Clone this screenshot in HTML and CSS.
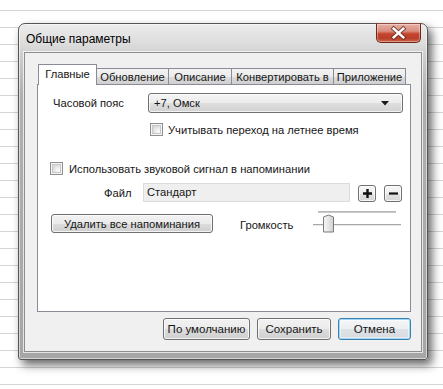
FILE: index.html
```html
<!DOCTYPE html>
<html lang="ru">
<head>
<meta charset="utf-8">
<title>Общие параметры</title>
<link rel="stylesheet" href="styles.css">
</head>
<body>
<div class="dialog">
  <div class="titlebar">
    <span class="title">Общие параметры</span>
    <div class="close">
      <svg width="45" height="20" viewBox="0 0 45 20">
        <path d="M17.5 5.5 L27.5 14.5 M27.5 5.5 L17.5 14.5" stroke="#6a2a20" stroke-width="4.6" stroke-linecap="square" fill="none" opacity="0.75"/>
        <path d="M17.5 5.5 L27.5 14.5 M27.5 5.5 L17.5 14.5" stroke="#ffffff" stroke-width="2.6" stroke-linecap="square" fill="none"/>
      </svg>
    </div>
  </div>
  <div class="client">
    <div class="tabs">
      <div class="tab tab-main active">Главные</div>
      <div class="tab tab-update">Обновление</div>
      <div class="tab tab-desc">Описание</div>
      <div class="tab tab-conv">Конвертировать в</div>
      <div class="tab tab-app">Приложение</div>
    </div>
    <div class="panel">
      <div class="row row-tz">
        <span class="label-tz">Часовой пояс</span>
        <div class="combo">
          <span>+7, Омск</span>
          <svg width="8" height="5" viewBox="0 0 8 5"><path d="M0 0 H8 L4 4.5 Z" fill="#1a1a1a"/></svg>
        </div>
      </div>
      <div class="row row-dst">
        <span class="check"></span>
        <span>Учитывать переход на летнее время</span>
      </div>
      <div class="row row-sound">
        <span class="check"></span>
        <span>Использовать звуковой сигнал в напоминании</span>
      </div>
      <div class="row row-file">
        <span class="label-file">Файл</span>
        <div class="field">Стандарт</div>
        <div class="sqbtn">
          <svg width="9" height="9" viewBox="0 0 9 9"><path d="M3.3 0 H5.7 V3.3 H9 V5.7 H5.7 V9 H3.3 V5.7 H0 V3.3 H3.3 Z" fill="#111"/></svg>
        </div>
        <div class="sqbtn">
          <svg width="9" height="9" viewBox="0 0 9 9"><path d="M0 3.4 H9 V5.6 H0 Z" fill="#111"/></svg>
        </div>
      </div>
      <div class="row row-vol">
        <div class="btn btn-clear">Удалить все напоминания</div>
        <span class="label-vol">Громкость</span>
        <svg class="slider" width="88" height="24" viewBox="0 0 88 24">
          <rect x="5" y="0" width="78" height="2" fill="#c9c9c9"/>
          <rect x="5" y="0" width="78" height="1" fill="#b8b8b8"/>
          <rect x="0" y="13" width="88" height="1" fill="#a8a8a8"/>
          <rect x="0" y="14" width="88" height="1" fill="#e8e8e8"/>
          <defs>
            <linearGradient id="th" x1="0" y1="0" x2="1" y2="0">
              <stop offset="0" stop-color="#f6f6f6"/>
              <stop offset="0.5" stop-color="#e6e6e6"/>
              <stop offset="1" stop-color="#cfcfcf"/>
            </linearGradient>
          </defs>
          <path d="M10.5 6.5 L15.5 4.5 L20.5 6.5 V21.5 H10.5 Z" transform="translate(0 -0.5)" fill="url(#th)" stroke="#7b7b7b" stroke-width="1" stroke-linejoin="round"/>
        </svg>
      </div>
    </div>
    <div class="buttons">
      <div class="btn btn-dlg btn-default-val">По умолчанию</div>
      <div class="btn btn-dlg btn-save">Сохранить</div>
      <div class="btn btn-dlg btn-cancel">Отмена</div>
    </div>
  </div>
</div>
</body>
</html>
```

FILE: styles.css
```css
* { box-sizing: border-box; }
html, body { margin: 0; padding: 0; }
body {
  width: 443px;
  height: 389px;
  overflow: hidden;
  font-family: "Liberation Sans", Arial, sans-serif;
  font-size: 11.2px;
  color: #151515;
  background: #fff repeating-linear-gradient(to bottom, transparent 0 10px, #d4d4d4 10px 11px, transparent 11px 17px);
  padding-top: 23px;
  padding-left: 18px;
}
.dialog {
  width: 410px;
  height: 337px;
  border: 1px solid #555;
  border-radius: 7px 7px 3px 3px;
  background: linear-gradient(to bottom, #ececec 0, #dcdcdc 20px, #cfcfcf 30px, #b0b0b0 70px, #a6a6a6 100%);
  box-shadow: 4px 5px 10px rgba(0,0,0,0.6), inset 0 0 0 1px rgba(255,255,255,0.55);
  padding: 0 5px 7px 5px;
  display: flex;
  flex-direction: column;
}
.titlebar {
  height: 28px;
  display: flex;
  justify-content: space-between;
  align-items: flex-start;
}
.title {
  margin-top: 8px;
  padding-left: 2px;
  font-size: 12px;
  color: #000;
}
.close {
  width: 45px;
  height: 20px;
  margin-top: -1px;
  margin-right: 1px;
  border: 1px solid #6e2619;
  border-top-color: #8a4b40;
  border-radius: 0 0 5px 5px;
  background: linear-gradient(to bottom, #e8b0a5 0, #d88d7e 40%, #c4442e 55%, #b8402a 80%, #d0674c 100%);
  box-shadow: inset 0 0 0 1px rgba(255,255,255,0.35);
  display: flex;
  align-items: center;
  justify-content: center;
}
.close svg { display: block; margin-top: -1px; }
.client {
  flex: 1;
  background: #f0f0f0;
  border: 1px solid #8d8d8d;
  box-shadow: 0 0 0 1px rgba(255,255,255,0.7);
  padding: 11px 0 0 12px;
  display: flex;
  flex-direction: column;
}
.tabs {
  display: flex;
  align-items: flex-end;
  height: 21px;
  padding-left: 1px;
  position: relative;
  z-index: 1;
}
.tab {
  height: 16px;
  border: 1px solid #898c95;
  border-bottom: none;
  margin-left: -1px;
  background: linear-gradient(to bottom, #f3f3f3 0, #ebebeb 50%, #dddddd 51%, #cfcfcf 100%);
  text-align: center;
  line-height: 16px;
  white-space: nowrap;
  margin-bottom: 1px;
}
.tab:first-child { margin-left: 0; }
.tab.active {
  height: 21px;
  background: #fff;
  line-height: 18px;
  margin-bottom: 0;
  border-radius: 1px 1px 0 0;
  padding-bottom: 3px;
}
.tab-main { width: 59px; }
.tab-update { width: 73px; }
.tab-desc { width: 64px; }
.tab-conv { width: 103px; }
.tab-app { width: 73px; }
.panel {
  width: 374px;
  height: 228px;
  margin-top: -1px;
  background: #fff;
  border: 1px solid #898c95;
  display: flex;
  flex-direction: column;
}
.row { display: flex; align-items: center; white-space: nowrap; }
.row-tz { margin-top: 8px; padding-left: 15px; height: 20px; }
.label-tz { width: 95px; }
.combo {
  width: 255px;
  height: 20px;
  border: 1px solid #707070;
  border-radius: 3px;
  background: linear-gradient(to bottom, #f4f4f4 0, #ececec 50%, #dedede 51%, #d2d2d2 100%);
  box-shadow: inset 0 0 0 1px rgba(255,255,255,0.7);
  display: flex;
  align-items: center;
  justify-content: space-between;
  padding: 0 13px 0 5px;
}
.combo svg { display: block; }
.row-dst { margin-top: 10px; padding-left: 112px; height: 13px; gap: 5px; }
.row-sound { margin-top: 26px; padding-left: 12px; height: 13px; gap: 6px; }
.check {
  width: 13px;
  height: 13px;
  flex: none;
  border: 1px solid #8e8f8f;
  background: #fff;
  box-shadow: inset 0 0 0 1px #f4f4f4, inset 0 0 0 2px #c8c8c8, inset 2px 2px 4px 2px #d6d6d6;
}
.row-file { margin-top: 8px; padding-left: 66px; height: 19px; }
.label-file { width: 39px; }
.field {
  width: 207px;
  height: 19px;
  border: 1px solid #dcdcdc;
  background: #efefef;
  padding-left: 3px;
  line-height: 17px;
  margin-right: 8px;
}
.sqbtn {
  width: 18px;
  height: 17px;
  margin-top: 2px;
  border: 1px solid #707070;
  border-radius: 3px;
  background: linear-gradient(to bottom, #f6f6f6 0, #eeeeee 50%, #e0e0e0 51%, #d6d6d6 100%);
  box-shadow: inset 0 0 0 1px rgba(255,255,255,0.8);
  display: flex;
  align-items: center;
  justify-content: center;
}
.sqbtn + .sqbtn { margin-left: 8px; }
.sqbtn svg { display: block; }
.row-vol { margin-top: 12px; padding-left: 13px; align-items: flex-start; height: 20px; }
.btn {
  border: 1px solid #707070;
  border-radius: 3px;
  background: linear-gradient(to bottom, #f2f2f2 0, #ebebeb 50%, #dddddd 51%, #cfcfcf 100%);
  box-shadow: inset 0 0 0 1px rgba(255,255,255,0.75);
  display: flex;
  align-items: center;
  justify-content: center;
  white-space: nowrap;
}
.btn-clear { width: 162px; height: 19px; }
.label-vol { margin-left: 27px; width: 73px; line-height: 19px; padding-top: 2px; }
.slider { display: block; margin-top: -3px; }
.buttons {
  width: 374px;
  margin-top: 6px;
  display: flex;
  justify-content: flex-end;
  gap: 7px;
}
.btn-dlg { height: 22px; font-size: 11.5px; }
.btn-default-val { width: 87px; }
.btn-save { width: 74px; }
.btn-cancel {
  width: 73px;
  border-color: #3c7fb1;
  background: linear-gradient(to bottom, #f4f6f8 0, #eceef0 50%, #dfe2e5 51%, #d6dadf 100%);
  box-shadow: inset 0 0 0 1px #9fd7f5, inset 0 0 0 2px rgba(255,255,255,0.5);
}
```
